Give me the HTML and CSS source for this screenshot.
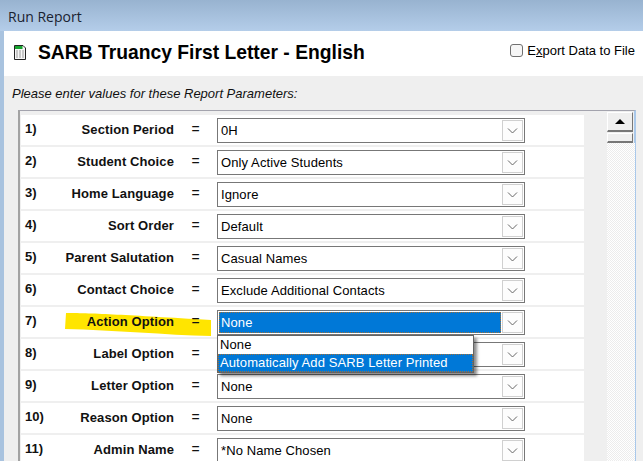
FILE: index.html
```html
<!DOCTYPE html>
<html lang="en">
<head>
<meta charset="utf-8">
<title>Run Report</title>
<link rel="stylesheet" href="styles.css">
</head>
<body>
<div class="window">
  <div class="titlebar">Run Report</div>
  <div class="content">
  <div class="header">
    <svg class="doc-icon" width="12" height="15" viewBox="0 0 12 15">
      <path d="M.5.5H9L11.5 3V14.5H.5Z" fill="#f6f6f6" stroke="#222"/>
      <path d="M1 1H8.5V4H1Z" fill="#17a52f"/>
      <path d="M2 6h8M2 8h8M2 10h8M2 12h8" stroke="#9a9a9a" stroke-dasharray="2 1"/>
    </svg>
    <h1 class="report-title">SARB Truancy First Letter - English</h1>
    <label class="export"><span class="checkbox"></span><span>E<u>x</u>port Data to File</span></label>
  </div>
  <div class="body">
    <p class="prompt">Please enter values for these Report Parameters:</p>
    <div class="panel">
      <div class="rows">
        <div class="row"><span class="num">1)</span><span class="name">Section Period</span><span class="eq">=</span><div class="combo"><span class="val">0H</span><span class="btn"><svg width="11" height="6" viewBox="0 0 11 6"><path d="M1 .5l4.5 4.5L10 .5" fill="none" stroke="#666"/></svg></span></div></div>
        <div class="row"><span class="num">2)</span><span class="name">Student Choice</span><span class="eq">=</span><div class="combo"><span class="val">Only Active Students</span><span class="btn"><svg width="11" height="6" viewBox="0 0 11 6"><path d="M1 .5l4.5 4.5L10 .5" fill="none" stroke="#666"/></svg></span></div></div>
        <div class="row"><span class="num">3)</span><span class="name">Home Language</span><span class="eq">=</span><div class="combo"><span class="val">Ignore</span><span class="btn"><svg width="11" height="6" viewBox="0 0 11 6"><path d="M1 .5l4.5 4.5L10 .5" fill="none" stroke="#666"/></svg></span></div></div>
        <div class="row"><span class="num">4)</span><span class="name">Sort Order</span><span class="eq">=</span><div class="combo"><span class="val">Default</span><span class="btn"><svg width="11" height="6" viewBox="0 0 11 6"><path d="M1 .5l4.5 4.5L10 .5" fill="none" stroke="#666"/></svg></span></div></div>
        <div class="row"><span class="num">5)</span><span class="name">Parent Salutation</span><span class="eq">=</span><div class="combo"><span class="val">Casual Names</span><span class="btn"><svg width="11" height="6" viewBox="0 0 11 6"><path d="M1 .5l4.5 4.5L10 .5" fill="none" stroke="#666"/></svg></span></div></div>
        <div class="row"><span class="num">6)</span><span class="name">Contact Choice</span><span class="eq">=</span><div class="combo"><span class="val">Exclude Additional Contacts</span><span class="btn"><svg width="11" height="6" viewBox="0 0 11 6"><path d="M1 .5l4.5 4.5L10 .5" fill="none" stroke="#666"/></svg></span></div></div>
        <div class="row"><span class="num">7)</span><span class="name"><span class="hl-wrap"><svg class="highlight" width="146" height="23" viewBox="0 0 146 23"><path d="M1 0C30 0 60 2 146 7L146 23C100 22 50 17 0 16Z" fill="#ffe500"/></svg><span class="hl-text">Action Option</span></span></span><span class="eq">=</span>
          <div class="combo">
            <span class="val selected">None</span><span class="btn"><svg width="11" height="6" viewBox="0 0 11 6"><path d="M1 .5l4.5 4.5L10 .5" fill="none" stroke="#666"/></svg></span>
            <div class="dropdown">
              <div class="opt">None</div>
              <div class="opt opt-active">Automatically Add SARB Letter Printed</div>
            </div>
          </div>
        </div>
        <div class="row"><span class="num">8)</span><span class="name">Label Option</span><span class="eq">=</span><div class="combo"><span class="val"></span><span class="btn"><svg width="11" height="6" viewBox="0 0 11 6"><path d="M1 .5l4.5 4.5L10 .5" fill="none" stroke="#666"/></svg></span></div></div>
        <div class="row"><span class="num">9)</span><span class="name">Letter Option</span><span class="eq">=</span><div class="combo"><span class="val">None</span><span class="btn"><svg width="11" height="6" viewBox="0 0 11 6"><path d="M1 .5l4.5 4.5L10 .5" fill="none" stroke="#666"/></svg></span></div></div>
        <div class="row"><span class="num">10)</span><span class="name">Reason Option</span><span class="eq">=</span><div class="combo"><span class="val">None</span><span class="btn"><svg width="11" height="6" viewBox="0 0 11 6"><path d="M1 .5l4.5 4.5L10 .5" fill="none" stroke="#666"/></svg></span></div></div>
        <div class="row"><span class="num">11)</span><span class="name">Admin Name</span><span class="eq">=</span><div class="combo"><span class="val">*No Name Chosen</span><span class="btn"><svg width="11" height="6" viewBox="0 0 11 6"><path d="M1 .5l4.5 4.5L10 .5" fill="none" stroke="#666"/></svg></span></div></div>
      </div>
      <div class="scrollbar">
        <div class="arrow"><svg width="10" height="5" viewBox="0 0 10 5"><path d="M5 0L10 5H0Z" fill="#000"/></svg></div>
        <div class="thumb"></div>
        <div class="track"></div>
      </div>
    </div>
  </div>
  </div>
</div>
</body>
</html>
```
FILE: styles.css
```css
html, body { margin: 0; padding: 0; height: 100%; overflow: hidden; }
body { font-family: "Liberation Sans", Arial, sans-serif; color: #000; background: #fff; }
.window { width: 643px; height: 461px; display: flex; flex-direction: column; overflow: hidden; }
.titlebar { height: 31px; padding-left: 8px; flex: none; background: linear-gradient(#98b3d0, #b4cde9); font-size: 14px; line-height: 34px; color: #1a2230; font-family: "Open Sans", "Liberation Sans", sans-serif; }
.content { flex: 1; min-height: 0; display: flex; flex-direction: column; border-left: 4px solid #a9c3df; }
.header { height: 45px; flex: none; background: #fff; display: flex; align-items: center; padding-left: 10px; }
.doc-icon { flex: none; margin-right: 12px; margin-bottom: 3px; }
.report-title { margin: 0 0 2px; font-size: 19.3px; font-weight: bold; flex: 1; line-height: 22px; }
.export { display: flex; align-items: center; gap: 4px; font-size: 13px; margin-right: 8px; margin-bottom: 7px; }
.checkbox { width: 11px; height: 11px; border: 1px solid #707070; border-radius: 3px; background: #f6f6f6; }
.body { flex: 1; background: #efefef; padding: 10px 7px 0 14px; min-height: 0; }
.prompt { margin: 0 0 8px -6px; font-size: 13px; font-style: italic; line-height: 16px; color: #111; }
.panel { display: flex; border-top: 1px solid #a3a3ad; border-left: 2px solid #a3a3a3; border-right: 2px solid #a9c8ea; height: 400px; padding: 4px 0 0 1px; }
.rows { width: 563px; flex: none; display: flex; flex-direction: column; gap: 2px; }
.row { height: 30px; flex: none; background: #fff; display: flex; align-items: center; font-size: 13px; font-weight: bold; color: #111; }
.num { width: 36px; padding: 0 0 4px 4px; box-sizing: border-box; }
.name { width: 117px; text-align: right; letter-spacing: .1px; padding-bottom: 2px; }
.hl-wrap { position: relative; display: inline-block; }
.highlight { position: absolute; left: -22px; top: -1px; }
.hl-text { position: relative; }
.eq { position: relative; width: 43px; text-align: center; font-weight: normal; font-size: 14px; padding-bottom: 2px; }
.combo { position: relative; width: 308px; height: 25px; box-sizing: border-box; border: 1px solid #777; background: #fff; display: flex; align-items: center; align-self: flex-start; margin-top: 3px; font-weight: normal; font-size: 13px; letter-spacing: .1px; color: #000; }
.val { flex: 1; padding-left: 3px; line-height: 23px; }
.val.selected { background: #0078d7; color: #fff; margin: 1px 0 1px 1px; padding-left: 2px; height: 21px; line-height: 21px; outline: 1px dotted #a0703a; outline-offset: -1px; }
.btn { width: 21px; height: 21px; box-sizing: border-box; margin: 0 1px; border: 1px solid #d0d0d0; display: flex; align-items: center; justify-content: center; flex: none; background: #fdfdfd; }
.dropdown { position: absolute; left: -1px; top: 24px; width: 257px; box-sizing: border-box; background: #fff; border: 1px solid #646464; box-shadow: 3px 3px 3px rgba(0,0,0,.45); z-index: 3; }
.opt { height: 18px; line-height: 17px; padding-left: 2px; }
.opt-active { background: #0078d7; color: #fff; outline: 1px dotted #a0703a; outline-offset: -1px; }
.scrollbar { width: 28px; margin: -3px 0 0 23px; flex: none; display: flex; flex-direction: column; }
.arrow { height: 20px; box-sizing: border-box; width: 26px; margin-bottom: 1px; background: #efefef; border: 1px solid #fff; border-right: 1px solid #777; border-bottom: 2px solid #777; display: flex; align-items: center; justify-content: center; flex: none; }
.thumb { height: 10px; width: 26px; box-sizing: border-box; background: #efefef; border: 1px solid #fff; border-right: 1px solid #777; border-bottom: 2px solid #777; flex: none; }
.track { flex: 1; width: 28px; background: repeating-conic-gradient(#fff 0 25%, #ececec 0 50%) 0 0 / 2px 2px; }
```
